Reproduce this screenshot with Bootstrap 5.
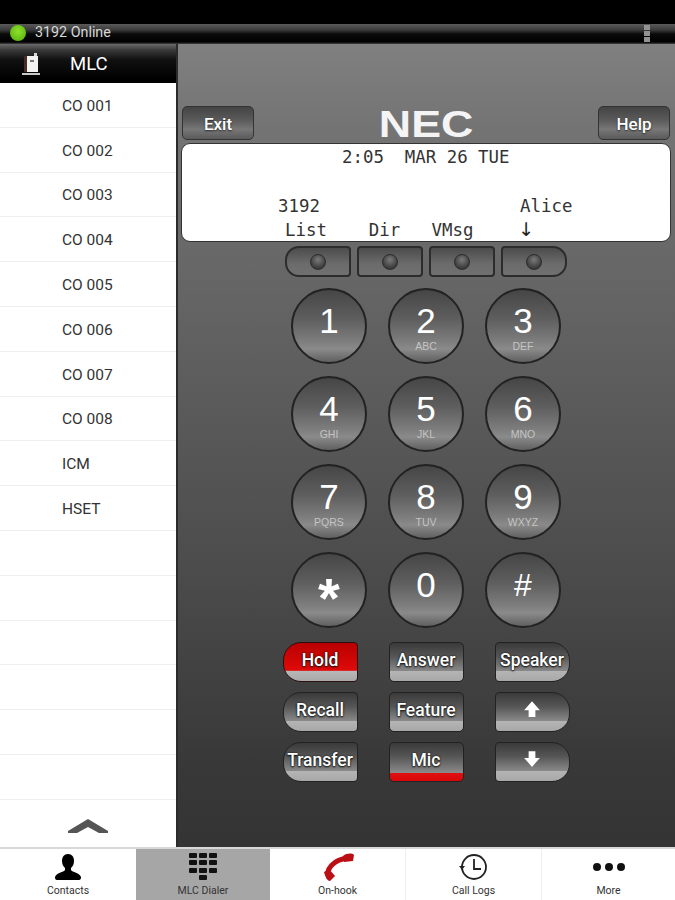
<!DOCTYPE html>
<html lang="en">
<head>
    <meta charset="UTF-8">
    <title>MLC Dialer</title>
    <link rel="stylesheet" href="https://cdn.jsdelivr.net/npm/bootstrap@5.3.0/dist/css/bootstrap.min.css">
    <style>
        html, body { height: 900px; overflow: hidden; }
        body { background: #000; font-family: Roboto, "Liberation Sans", sans-serif; }
        .top-gap { height: 24px; background: #000; }
        .status-strip { height: 20px; padding-left: 10px; padding-right: 25px; padding-bottom: 2px; color: #d8d8d8; font-size: 14.3px;
            background: linear-gradient(#5a5a5a, #3a3a3a 30%, #0a0a0a 50%, #000 90%, #444); }
        .green-dot { width: 16px; height: 16px; border-radius: 50%; margin-right: 9px;
            background: radial-gradient(circle at 50% 40%, #8fe02c, #5cb80f 80%); }
        .more-dots { width: 6px; padding-top: 2px; }
        .more-dots i { display: block; height: 5px; margin-bottom: 1px; background: #929292; }
        .main-area { height: 803px; }
        .side-col { width: 176px; background: #fff; }
        .mlc-head { height: 39px; color: #fff; font-size: 18.5px; padding-left: 21px;
            background: linear-gradient(#6a6a6a, #3a3a3a 15%, #111 40%, #000 90%); }
        .mlc-head svg { margin-right: 29px; }
        .mlc-head span { padding-top: 2px; }
        .mlc-list .list-group-item { height: 44.8px; padding: 3px 0 0 62px; display: flex; align-items: center; font-size: 15.5px;
            color: #333; border-color: #eee; border-width: 0 0 1px; border-radius: 0; }
        .chevron-box { height: 47px; padding-top: 18px; }
        .phone-panel { width: 499px; padding-top: 62px; padding-right: 1px; border-left: 2px solid #2b2b2b;
            background: linear-gradient(#808080, #747474 10%, #5e5e5e 40%, #4c4c4c 65%, #383838 90%, #343434); }
        .head-row { width: 488px; height: 34px; margin-bottom: 3px; }
        .metal-btn { width: 72px; height: 34px; padding: 4px 0 0; font-size: 17px; font-weight: 500; color: #fff; border: 1px solid #333; border-radius: 5px;
            text-shadow: 0 1px 2px #222; background: linear-gradient(#444, #5a5a5a 40%, #777 70%, #5a5a5a); }
        .nec-mark { font-family: "Liberation Sans", sans-serif; font-weight: 700; font-size: 37px; line-height: 37px; color: #f4f4f4;
            transform: scaleX(1.21); }
        .lcd-box { width: 490px; height: 99px; margin-bottom: 4px; padding-top: 1px; background: #fff; border: 1px solid #333; border-radius: 9px;
            font-family: "DejaVu Sans Mono", monospace; font-size: 17.4px; color: #333; }
        .lcd-line { height: 24.5px; line-height: 24.5px; white-space: pre; }
        .lcd-a { padding-left: 160px; }
        .lcd-c { padding-left: 96px; letter-spacing: .05px; }
        .lcd-d { padding-left: 103px; margin-top: -2px; }
        .lcd-d span { font-family: "DejaVu Sans", sans-serif; color: #222; font-size: 19px; margin-left: 3px; }
        .soft-row { gap: 6px; margin-bottom: 11px; }
        .soft-key { width: 66px; height: 31px; padding: 0; border: 2px solid #2c2c2c; border-radius: 4px;
            background: linear-gradient(#4c4c4c, #6c6c6c 60%, #707070); }
        .soft-key.round-l { border-radius: 14px 4px 4px 14px; }
        .soft-key.round-r { border-radius: 4px 14px 14px 4px; }
        .led { width: 16px; height: 16px; border-radius: 50%; border: 1px solid #2a2a2a;
            background: radial-gradient(circle at 50% 35%, #7a7a7a, #3c3c3c 70%); }
        .dial-grid { display: grid; grid-template-columns: repeat(3, 76px); column-gap: 21px; row-gap: 12px; margin-bottom: 14px; }
        .dial-key { width: 76px; height: 76px; padding: 15px 0 0; border: 2px solid #222; border-radius: 50%; color: #fff;
            display: flex; flex-direction: column; align-items: center; justify-content: flex-start;
            background: linear-gradient(#464646, #5e5e5e 40%, #7a7a7a 68%, #8a8a8a 82%, #606060); line-height: 1; }
        .dial-key b { display: block; height: 32px; font-family: "Liberation Sans", sans-serif; font-weight: 400; font-size: 35px; line-height: 32px; }
        .dial-key span { display: block; margin-top: 3px; font-size: 10.5px; line-height: 12px; color: #c4c4c4; font-family: "Liberation Sans", sans-serif; }
        .dial-key b.hash-sign { font-size: 32px; }
        .dial-key b.star-sign { font-weight: 700; font-size: 56px; line-height: 58px; }
        .func-grid { display: grid; grid-template-columns: repeat(3, 75px); column-gap: 31px; row-gap: 10px; }
        .func-key { width: 75px; height: 40px; padding: 0 0 3px; border: 1.5px solid #222; border-radius: 5px; color: #fff; font-size: 17.5px; font-weight: 500;
            text-shadow: 0 0 2px #111, 0 1px 2px #111; line-height: 1; background: linear-gradient(#3a3a3a, #555 35%, #8a8a8a 74%, #b4b4b4 75%, #a8a8a8); white-space: nowrap; }
        .func-key svg { margin-bottom: 3px; }
        .func-key.round-l { border-radius: 18px 4px 4px 18px; }
        .func-key.round-r { border-radius: 4px 18px 18px 4px; }
        .func-key.lit-red { background: linear-gradient(#b80000, #e00a0a 72%, #b8b8b8 74%, #a8a8a8); border-color: #2a1010; }
        .func-key.mic-on { background: linear-gradient(#3a3a3a, #555 35%, #8a8a8a 78%, #e01010 80%, #d80808); }
        .foot-nav { height: 53px; background: #fff; border-top: 2px solid #d8d8d8; }
        .foot-item { width: 135px; color: #333; font-size: 10.5px; line-height: 12px; padding-top: 4px; }
        .foot-item:first-child { width: 136px; }
        .foot-item svg { display: block; margin-bottom: 4px; }
        .foot-item.active-tab { background: #a6a6a6; width: 134px; }
        .foot-item.split-line { border-left: 1px solid #eee; }
        .foot-item.split-line:last-child { width: 134px; }
        .foot-item.wide-tab { width: 136px; }
    </style>
</head>
<body>
<div class="top-gap"></div>
<div class="status-strip d-flex align-items-center">
    <div class="green-dot"></div>
    <div class="flex-grow-1">3192 Online</div>
    <div class="more-dots"><i></i><i></i><i></i></div>
</div>
<div class="main-area d-flex">
    <div class="side-col d-flex flex-column">
        <div class="mlc-head d-flex align-items-center">
            <svg width="20" height="24" viewBox="0 0 20 24"><path d="M1 21h18v2H1z" fill="#c8c8c8"/><path d="M3 4h3v16H3z" fill="#4a2a24"/><path d="M6 4h11v16H6z" fill="#f2f2f2"/><path d="M13 1h3v3h-3z" fill="#d8d8d8"/><path d="M9 8h4v2H9z" fill="#777"/></svg>
            <span>MLC</span>
        </div>
        <div class="list-group mlc-list">
            <div class="list-group-item">CO 001</div>
            <div class="list-group-item">CO 002</div>
            <div class="list-group-item">CO 003</div>
            <div class="list-group-item">CO 004</div>
            <div class="list-group-item">CO 005</div>
            <div class="list-group-item">CO 006</div>
            <div class="list-group-item">CO 007</div>
            <div class="list-group-item">CO 008</div>
            <div class="list-group-item">ICM</div>
            <div class="list-group-item">HSET</div>
            <div class="list-group-item"></div>
            <div class="list-group-item"></div>
            <div class="list-group-item"></div>
            <div class="list-group-item"></div>
            <div class="list-group-item"></div>
            <div class="list-group-item"></div>
        </div>
        <div class="chevron-box d-flex justify-content-center">
            <svg width="42" height="16" viewBox="0 0 42 16"><path d="M21 1 41 13v2H32L21 9 10 15H1v-2z" fill="#555"/></svg>
        </div>
    </div>
    <div class="phone-panel d-flex flex-column align-items-center">
        <div class="head-row d-flex justify-content-between">
            <button class="btn metal-btn">Exit</button>
            <div class="nec-mark">NEC</div>
            <button class="btn metal-btn">Help</button>
        </div>
        <div class="lcd-box">
            <div class="lcd-line lcd-a">2:05  MAR 26 TUE</div>
            <div class="lcd-line"></div>
            <div class="lcd-line lcd-c">3192                   Alice</div>
            <div class="lcd-line lcd-d">List    Dir   VMsg    <span>↓</span></div>
        </div>
        <div class="soft-row d-flex">
            <div class="soft-key round-l d-flex align-items-center justify-content-center"><div class="led"></div></div>
            <div class="soft-key d-flex align-items-center justify-content-center"><div class="led"></div></div>
            <div class="soft-key d-flex align-items-center justify-content-center"><div class="led"></div></div>
            <div class="soft-key round-r d-flex align-items-center justify-content-center"><div class="led"></div></div>
        </div>
        <div class="dial-grid">
            <button class="btn dial-key"><b>1</b></button>
            <button class="btn dial-key"><b>2</b><span>ABC</span></button>
            <button class="btn dial-key"><b>3</b><span>DEF</span></button>
            <button class="btn dial-key"><b>4</b><span>GHI</span></button>
            <button class="btn dial-key"><b>5</b><span>JKL</span></button>
            <button class="btn dial-key"><b>6</b><span>MNO</span></button>
            <button class="btn dial-key"><b>7</b><span>PQRS</span></button>
            <button class="btn dial-key"><b>8</b><span>TUV</span></button>
            <button class="btn dial-key"><b>9</b><span>WXYZ</span></button>
            <button class="btn dial-key"><b class="star-sign">*</b></button>
            <button class="btn dial-key"><b>0</b></button>
            <button class="btn dial-key"><b class="hash-sign">#</b></button>
        </div>
        <div class="func-grid">
            <button class="btn func-key round-l lit-red">Hold</button>
            <button class="btn func-key">Answer</button>
            <button class="btn func-key round-r">Speaker</button>
            <button class="btn func-key round-l">Recall</button>
            <button class="btn func-key">Feature</button>
            <button class="btn func-key round-r"><svg width="18" height="18" viewBox="0 0 16 16"><path d="M8 1 15 9h-4v6H5V9H1z" fill="#fff"/></svg></button>
            <button class="btn func-key round-l">Transfer</button>
            <button class="btn func-key mic-on">Mic</button>
            <button class="btn func-key round-r"><svg width="18" height="18" viewBox="0 0 16 16"><path d="M8 15 15 7h-4V1H5v6H1z" fill="#fff"/></svg></button>
        </div>
    </div>
</div>
<div class="foot-nav d-flex">
    <div class="foot-item d-flex flex-column align-items-center">
        <svg width="28" height="28" viewBox="0 0 28 28"><path d="M14 1c4 0 6 3 6 7 0 3-1 5-3 7v2c1 2 9 3 10 7 .3 1.500-.5 3-2 3H3c-1.500 0-2.300-1.500-2-3 1-4 9-5 10-7v-2C9 13 8 11 8 8c0-4 2-7 6-7z" fill="#000"/></svg>
        <span>Contacts</span>
    </div>
    <div class="foot-item active-tab d-flex flex-column align-items-center">
        <svg width="28" height="28" viewBox="0 0 28 28" fill="#111"><rect x="0" y="0" width="8" height="5" rx="1"/><rect x="10" y="0" width="8" height="5" rx="1"/><rect x="20" y="0" width="8" height="5" rx="1"/><rect x="0" y="7" width="8" height="5" rx="1"/><rect x="10" y="7" width="8" height="5" rx="1"/><rect x="20" y="7" width="8" height="5" rx="1"/><rect x="0" y="15" width="8" height="5" rx="1"/><rect x="10" y="15" width="8" height="5" rx="1"/><rect x="20" y="15" width="8" height="5" rx="1"/><rect x="10" y="22" width="8" height="5" rx="1"/></svg>
        <span>MLC Dialer</span>
    </div>
    <div class="foot-item d-flex flex-column align-items-center">
        <svg width="34" height="28" viewBox="0 0 34 28"><path d="M8 25C4 17 12 6 28 5" fill="none" stroke="#bb0f16" stroke-width="5"/><path d="M3 19l5-3 6 7-5 5c-3 0-5-5-6-9zM23 9l-1-6c4-3 9-3 11-1l-1 6z" fill="#bb0f16"/></svg>
        <span>On-hook</span>
    </div>
    <div class="foot-item split-line wide-tab d-flex flex-column align-items-center">
        <svg width="30" height="28" viewBox="0 0 30 28"><circle cx="15" cy="14" r="12" fill="none" stroke="#222" stroke-width="1.800"/><path d="M15 6v10h7" fill="none" stroke="#222" stroke-width="1.800"/><path d="M0 13h6l-3 4z" fill="#222"/></svg>
        <span>Call Logs</span>
    </div>
    <div class="foot-item split-line d-flex flex-column align-items-center">
        <svg width="32" height="28" viewBox="0 0 32 28" fill="#111"><circle cx="4" cy="14" r="4"/><circle cx="16" cy="14" r="4"/><circle cx="28" cy="14" r="4"/></svg>
        <span>More</span>
    </div>
</div>
<script src="https://cdn.jsdelivr.net/npm/bootstrap@5.3.0/dist/js/bootstrap.bundle.min.js"></script>
</body>
</html>
